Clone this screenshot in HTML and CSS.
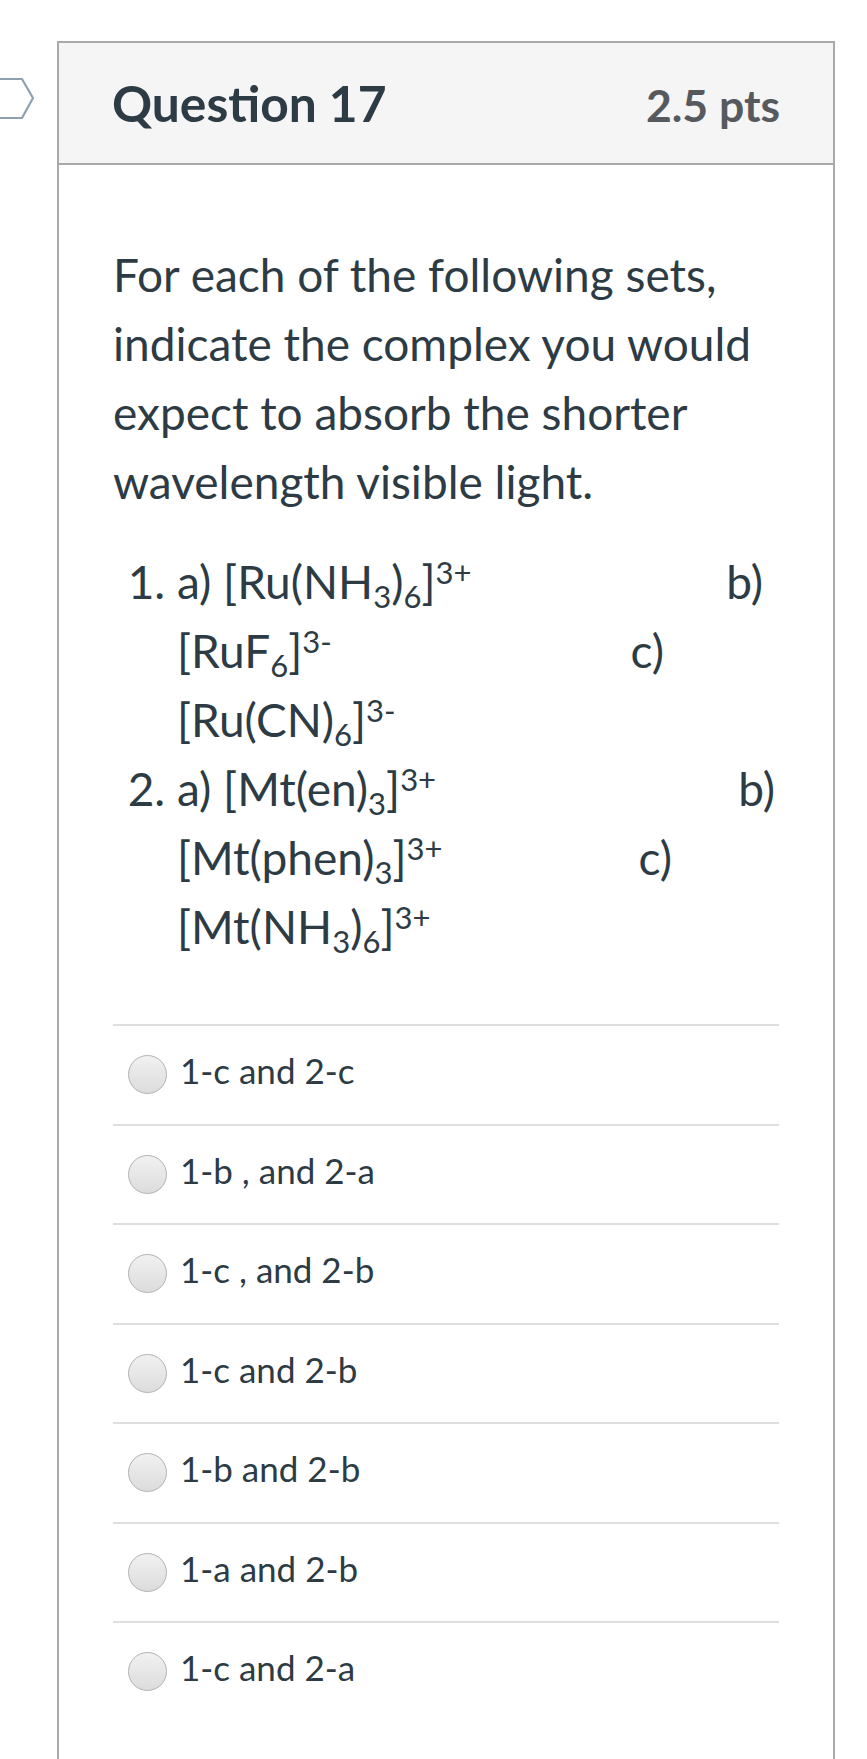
FILE: index.html
```html
<!DOCTYPE html>
<html>
<head>
<meta charset="utf-8">
<link rel="stylesheet" href="styles.css">
</head>
<body>
<div class="page">
  <svg class="flag" width="40" height="46" viewBox="0 0 40 46">
    <path d="M-10 2 H22 L33 21 L22 41 H-10 Z" fill="#fff" stroke="#8ea1b1" stroke-width="2.2" stroke-linejoin="round"/>
  </svg>
  <div class="card">
    <div class="header">
      <h2 class="title">Question 17</h2>
      <div class="pts">2.5 pts</div>
    </div>
    <div class="body">
      <p class="text">For each of the following sets, indicate the complex you would expect to absorb the shorter wavelength visible light.</p>
      <ol class="sets">
        <li>
          <div class="line"><span>a) [Ru(NH<sub>3</sub>)<sub>6</sub>]<sup>3+</sup></span><span class="lbl l1b">b)</span></div>
          <div class="line"><span>[RuF<sub>6</sub>]<sup>3-</sup></span><span class="lbl l1c">c)</span></div>
          <div class="line"><span>[Ru(CN)<sub>6</sub>]<sup>3-</sup></span></div>
        </li>
        <li>
          <div class="line"><span>a) [Mt(en)<sub>3</sub>]<sup>3+</sup></span><span class="lbl l2b">b)</span></div>
          <div class="line"><span>[Mt(phen)<sub>3</sub>]<sup>3+</sup></span><span class="lbl l2c">c)</span></div>
          <div class="line"><span>[Mt(NH<sub>3</sub>)<sub>6</sub>]<sup>3+</sup></span></div>
        </li>
      </ol>
      <div class="answers">
        <label class="answer"><span class="radio"></span><span class="atext">1-c and 2-c</span></label>
        <label class="answer"><span class="radio"></span><span class="atext">1-b , and 2-a</span></label>
        <label class="answer"><span class="radio"></span><span class="atext">1-c , and 2-b</span></label>
        <label class="answer"><span class="radio"></span><span class="atext">1-c and 2-b</span></label>
        <label class="answer"><span class="radio"></span><span class="atext">1-b and 2-b</span></label>
        <label class="answer"><span class="radio"></span><span class="atext">1-a and 2-b</span></label>
        <label class="answer"><span class="radio"></span><span class="atext">1-c and 2-a</span></label>
      </div>
    </div>
  </div>
</div>
</body>
</html>
```

FILE: styles.css
```css
html, body {
  margin: 0;
  padding: 0;
  background: #fff;
}

body {
  font-family: Lato, "Open Sans", sans-serif;
  color: #2d3b45;
  overflow: hidden;
}

.page {
  position: relative;
  padding: 41px 0 0 57px;
  height: 1718px;
}

.flag {
  position: absolute;
  left: 0;
  top: 77px;
}

.card {
  box-sizing: border-box;
  width: 778px;
  min-height: 1760px;
  border: 2px solid #a9a9a9;
  border-bottom: none;
}

.header {
  box-sizing: border-box;
  height: 122px;
  background: #f5f5f5;
  border-bottom: 2px solid #a9a9a9;
  display: flex;
  justify-content: space-between;
  align-items: center;
  padding: 0 53px 0 53px;
}

.title {
  margin: 0;
  font-size: 49.7px;
  font-weight: 700;
  color: #2d3b45;
}

.pts {
  font-size: 44.5px;
  font-weight: 700;
  color: #565a5e;
  padding-top: 2px;
}

.body {
  padding: 75px 54px 0 54px;
}

.text {
  margin: 0 0 31px;
  font-size: 46px;
  line-height: 69px;
}

.sets {
  margin: 0;
  padding-left: 64px;
  font-size: 46px;
  line-height: 69px;
}

.line {
  display: flex;
  justify-content: space-between;
}

sub, sup {
  font-size: 31px;
  line-height: 0;
}

sub {
  vertical-align: -9px;
}

sup {
  vertical-align: 15px;
}

.l1b { margin-right: 16px; }
.l1c { margin-right: 115px; }
.l2b { margin-right: 4px; }
.l2c { margin-right: 107px; }

.answers {
  margin-top: 63px;
}

.answer {
  box-sizing: border-box;
  height: 99.5px;
  border-top: 2px solid #dedede;
  display: flex;
  align-items: center;
  padding-left: 15px;
}

.radio {
  box-sizing: border-box;
  width: 39px;
  height: 39px;
  border-radius: 50%;
  border: 1px solid #b2b2b2;
  background: linear-gradient(#f1f1f1, #dcdcdc);
  flex: none;
}

.atext {
  font-size: 35px;
  line-height: 54px;
  padding: 0 0 9px 13px;
}
```
